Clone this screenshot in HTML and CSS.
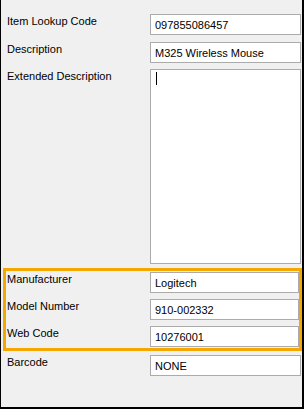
FILE: index.html
```html
<!DOCTYPE html>
<html lang="en">
<head>
    <meta charset="UTF-8">
    <title>Item Properties</title>
    <link rel="stylesheet" href="styles.css">
</head>
<body>
    <div class="window">
        <div class="row">
            <label class="field-label">Item Lookup Code</label>
            <div class="textbox">097855086457</div>
        </div>
        <div class="row">
            <label class="field-label">Description</label>
            <div class="textbox">M325 Wireless Mouse</div>
        </div>
        <div class="row row-memo">
            <label class="field-label">Extended Description</label>
            <div class="textbox memo"><span class="caret"></span></div>
        </div>

        <div class="highlight">
            <div class="row">
                <label class="field-label">Manufacturer</label>
                <div class="textbox">Logitech</div>
            </div>
            <div class="row">
                <label class="field-label">Model Number</label>
                <div class="textbox">910-002332</div>
            </div>
            <div class="row">
                <label class="field-label">Web Code</label>
                <div class="textbox">10276001</div>
            </div>
        </div>

        <div class="row">
            <label class="field-label">Barcode</label>
            <div class="textbox">NONE</div>
        </div>
    </div>
</body>
</html>
```

FILE: styles.css
```css
html, body {
    margin: 0;
    padding: 0;
}
body {
    font-family: 'Liberation Sans', Arial, sans-serif;
    font-size: 11px;
    line-height: 13px;
    color: #000;
}
.window {
    width: 304px;
    height: 409px;
    box-sizing: border-box;
    background: #F0F0F0;
    border-left: 1px solid #000;
    border-right: 2px solid #000;
    border-bottom: 2px solid #000;
    padding-top: 14px;
    display: flex;
    flex-direction: column;
    gap: 7px;
}
.row {
    display: flex;
    align-items: flex-start;
    padding-left: 6px;
    margin-right: 1px;
}
.row-memo {
    margin-top: -1px;
}
.field-label {
    width: 143px;
    flex: none;
    padding-top: 1px;
}
.textbox {
    flex: 1;
    height: 21px;
    box-sizing: border-box;
    background: #FFF;
    border: 1px solid #ABABAB;
    padding: 4px 4px 0 4px;
    white-space: nowrap;
    overflow: hidden;
}
.memo {
    height: 195px;
    padding-top: 2px;
}
.caret {
    display: block;
    width: 1px;
    height: 13px;
    margin-left: 1px;
    background: #000;
}
.highlight {
    margin: -3px 0 -3px 2px;
    border: 3px solid #F5A700;
    padding: 1px 0;
    display: flex;
    flex-direction: column;
    gap: 6px;
}
.highlight .row {
    padding-left: 1px;
    margin-right: 0;
}
```
